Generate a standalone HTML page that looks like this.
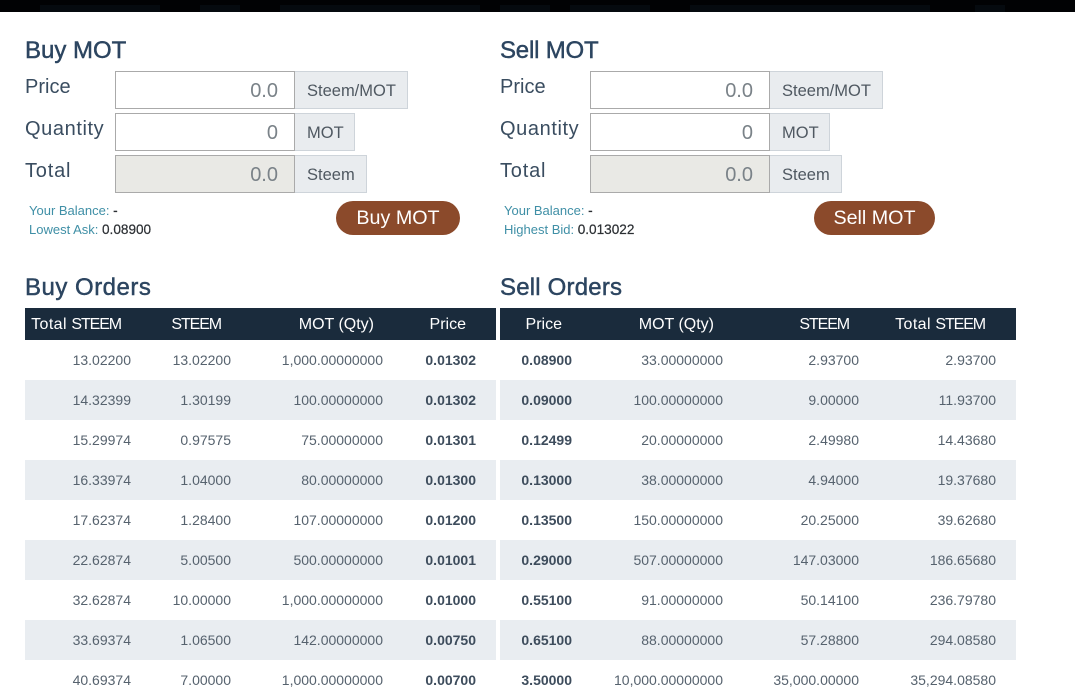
<!DOCTYPE html>
<html><head><meta charset="utf-8">
<style>
*{box-sizing:border-box}
html,body{margin:0;padding:0;background:#fff}
body{width:1075px;height:691px;overflow:hidden;position:relative;font-family:"Liberation Sans",sans-serif;color:#34495e}
.a{position:absolute;white-space:nowrap}
.bar{left:0;top:0;width:1075px;height:12px;background:#010204;overflow:hidden}
.bar i{position:absolute;top:5px;height:7px;background:#050a0f}
h2{position:absolute;margin:0;font-size:24px;line-height:30px;font-weight:normal;color:#2c4560;white-space:nowrap;-webkit-text-stroke:.45px #2c4560}
.lb{font-size:20px;line-height:26px;color:#3a4d60}
.in{height:38px;width:180px;border:1px solid #aaa;background:#fff;text-align:right;padding:1px 16px 0 0;font-size:20px;line-height:36px;color:#7a8288}
.in.d{background:#e9e9e5}
.ad{height:38px;border:1px solid #ced4da;border-left:0;background:#e9ecef;font-size:16.5px;line-height:38px;color:#4f5861;padding-left:12px}
.sm{font-size:13px;line-height:16px;color:#3f8fa6}
.sm b{font-weight:normal;font-size:13.6px;color:#2b2f33;-webkit-text-stroke:.2px #2b2f33}
.btn{height:34px;background:#8b4a2b;border-radius:17px;color:#fff;font-size:19.7px;line-height:35px;text-align:center}
table{position:absolute;top:308px;border-collapse:collapse;table-layout:fixed}
th{height:32px;padding:2px 0 0;background:#1a2b3c;color:#fff;font-weight:normal;font-size:16px;text-align:right;overflow:visible;white-space:nowrap}
th span{letter-spacing:-1.1px}
th em{font-style:normal;letter-spacing:.4px}
td{height:40px;padding:0;font-size:14px;text-align:right;color:#56626e;white-space:nowrap}
td.p{font-weight:bold;color:#3d4c5c}
tr:nth-child(odd) td{background:#e9edf1}
</style></head><body>
<div class="a bar"><i style="left:40px;width:120px"></i><i style="left:200px;width:40px"></i><i style="left:280px;width:200px"></i><i style="left:500px;width:50px"></i><i style="left:570px;width:80px"></i><i style="left:690px;width:240px"></i><i style="left:975px;width:30px"></i></div>

<h2 style="left:25px;top:36px">Buy MOT</h2>
<div class="a lb" style="left:25px;top:74px">Price</div>
<div class="a lb" style="left:25px;top:116px;letter-spacing:.6px">Quantity</div>
<div class="a lb" style="left:25px;top:158px;letter-spacing:.8px">Total</div>
<div class="a in" style="left:115px;top:71px">0.0</div><div class="a ad" style="left:295px;top:71px;width:113px">Steem/MOT</div>
<div class="a in" style="left:115px;top:113px">0</div><div class="a ad" style="left:295px;top:113px;width:60px">MOT</div>
<div class="a in d" style="left:115px;top:155px">0.0</div><div class="a ad" style="left:295px;top:155px;width:72px">Steem</div>
<div class="a sm" style="left:29px;top:203px">Your Balance: <b>-</b></div>
<div class="a sm" style="left:29px;top:222px">Lowest Ask: <b>0.08900</b></div>
<div class="a btn" style="left:336px;top:201px;width:124px">Buy MOT</div>

<h2 style="left:500px;top:36px;letter-spacing:-.2px">Sell MOT</h2>
<div class="a lb" style="left:500px;top:74px">Price</div>
<div class="a lb" style="left:500px;top:116px;letter-spacing:.6px">Quantity</div>
<div class="a lb" style="left:500px;top:158px;letter-spacing:.8px">Total</div>
<div class="a in" style="left:590px;top:71px">0.0</div><div class="a ad" style="left:770px;top:71px;width:113px">Steem/MOT</div>
<div class="a in" style="left:590px;top:113px">0</div><div class="a ad" style="left:770px;top:113px;width:60px">MOT</div>
<div class="a in d" style="left:590px;top:155px">0.0</div><div class="a ad" style="left:770px;top:155px;width:72px">Steem</div>
<div class="a sm" style="left:504px;top:203px">Your Balance: <b>-</b></div>
<div class="a sm" style="left:504px;top:222px">Highest Bid: <b>0.013022</b></div>
<div class="a btn" style="left:814px;top:201px;width:121px">Sell MOT</div>

<h2 style="left:25px;top:273px;letter-spacing:.5px">Buy Orders</h2>
<h2 style="left:500px;top:273px;letter-spacing:.2px">Sell Orders</h2>

<table style="left:25px;width:471px">
<colgroup><col style="width:106px"><col style="width:100px"><col style="width:152px"><col style="width:113px"></colgroup>
<tr><th style="padding-right:10px"><em>Total</em> <span>STEEM</span></th><th style="padding-right:10px"><span>STEEM</span></th><th style="padding-right:9px">MOT (Qty)</th><th style="padding-right:30px">Price</th></tr>
<tr><td>13.02200</td><td>13.02200</td><td>1,000.00000000</td><td class="p" style="padding-right:20px">0.01302</td></tr>
<tr><td>14.32399</td><td>1.30199</td><td>100.00000000</td><td class="p" style="padding-right:20px">0.01302</td></tr>
<tr><td>15.29974</td><td>0.97575</td><td>75.00000000</td><td class="p" style="padding-right:20px">0.01301</td></tr>
<tr><td>16.33974</td><td>1.04000</td><td>80.00000000</td><td class="p" style="padding-right:20px">0.01300</td></tr>
<tr><td>17.62374</td><td>1.28400</td><td>107.00000000</td><td class="p" style="padding-right:20px">0.01200</td></tr>
<tr><td>22.62874</td><td>5.00500</td><td>500.00000000</td><td class="p" style="padding-right:20px">0.01001</td></tr>
<tr><td>32.62874</td><td>10.00000</td><td>1,000.00000000</td><td class="p" style="padding-right:20px">0.01000</td></tr>
<tr><td>33.69374</td><td>1.06500</td><td>142.00000000</td><td class="p" style="padding-right:20px">0.00750</td></tr>
<tr><td>40.69374</td><td>7.00000</td><td>1,000.00000000</td><td class="p" style="padding-right:20px">0.00700</td></tr>
</table>

<table style="left:500px;width:516px">
<colgroup><col style="width:72px"><col style="width:151px"><col style="width:136px"><col style="width:157px"></colgroup>
<tr><th style="padding-right:10px">Price</th><th style="padding-right:9px">MOT (Qty)</th><th style="padding-right:10px"><span>STEEM</span></th><th style="padding-right:31px"><em>Total</em> <span>STEEM</span></th></tr>
<tr><td class="p">0.08900</td><td>33.00000000</td><td>2.93700</td><td style="padding-right:20px">2.93700</td></tr>
<tr><td class="p">0.09000</td><td>100.00000000</td><td>9.00000</td><td style="padding-right:20px">11.93700</td></tr>
<tr><td class="p">0.12499</td><td>20.00000000</td><td>2.49980</td><td style="padding-right:20px">14.43680</td></tr>
<tr><td class="p">0.13000</td><td>38.00000000</td><td>4.94000</td><td style="padding-right:20px">19.37680</td></tr>
<tr><td class="p">0.13500</td><td>150.00000000</td><td>20.25000</td><td style="padding-right:20px">39.62680</td></tr>
<tr><td class="p">0.29000</td><td>507.00000000</td><td>147.03000</td><td style="padding-right:20px">186.65680</td></tr>
<tr><td class="p">0.55100</td><td>91.00000000</td><td>50.14100</td><td style="padding-right:20px">236.79780</td></tr>
<tr><td class="p">0.65100</td><td>88.00000000</td><td>57.28800</td><td style="padding-right:20px">294.08580</td></tr>
<tr><td class="p">3.50000</td><td>10,000.00000000</td><td>35,000.00000</td><td style="padding-right:20px">35,294.08580</td></tr>
</table>
</body></html>
